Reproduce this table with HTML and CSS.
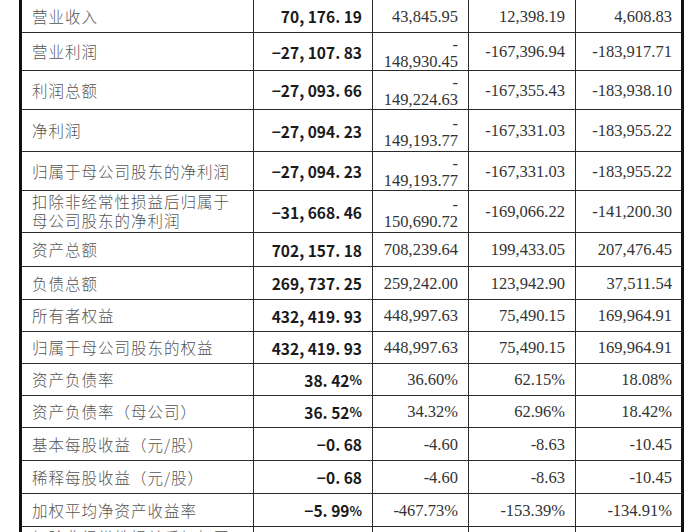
FILE: index.html
```html
<!DOCTYPE html>
<html lang="zh-CN">
<head>
<meta charset="utf-8">
<title>主要财务数据</title>
<link rel="stylesheet" href="styles.css">
</head>
<body>
<div class="sheet">
  <div class="c lab">营业收入</div><div class="c bold">70, 176. 19</div><div class="c num">43,845.95</div><div class="c num">12,398.19</div><div class="c num last">4,608.83</div>

  <div class="c lab">营业利润</div><div class="c bold">−27, 107. 83</div><div class="c num wrap">-<br>148,930.45</div><div class="c num">-167,396.94</div><div class="c num last">-183,917.71</div>

  <div class="c lab">利润总额</div><div class="c bold">−27, 093. 66</div><div class="c num wrap">-<br>149,224.63</div><div class="c num">-167,355.43</div><div class="c num last">-183,938.10</div>

  <div class="c lab">净利润</div><div class="c bold">−27, 094. 23</div><div class="c num wrap">-<br>149,193.77</div><div class="c num">-167,331.03</div><div class="c num last">-183,955.22</div>

  <div class="c lab">归属于母公司股东的净利润</div><div class="c bold">−27, 094. 23</div><div class="c num wrap">-<br>149,193.77</div><div class="c num">-167,331.03</div><div class="c num last">-183,955.22</div>

  <div class="c lab two">扣除非经常性损益后归属于<br>母公司股东的净利润</div><div class="c bold">−31, 668. 46</div><div class="c num wrap">-<br>150,690.72</div><div class="c num">-169,066.22</div><div class="c num last">-141,200.30</div>

  <div class="c lab">资产总额</div><div class="c bold">702, 157. 18</div><div class="c num">708,239.64</div><div class="c num">199,433.05</div><div class="c num last">207,476.45</div>

  <div class="c lab">负债总额</div><div class="c bold">269, 737. 25</div><div class="c num">259,242.00</div><div class="c num">123,942.90</div><div class="c num last">37,511.54</div>

  <div class="c lab">所有者权益</div><div class="c bold">432, 419. 93</div><div class="c num">448,997.63</div><div class="c num">75,490.15</div><div class="c num last">169,964.91</div>

  <div class="c lab">归属于母公司股东的权益</div><div class="c bold">432, 419. 93</div><div class="c num">448,997.63</div><div class="c num">75,490.15</div><div class="c num last">169,964.91</div>

  <div class="c lab">资产负债率</div><div class="c bold">38. 42<span class="pct">%</span></div><div class="c num">36.60%</div><div class="c num">62.15%</div><div class="c num last">18.08%</div>

  <div class="c lab">资产负债率（母公司）</div><div class="c bold">36. 52<span class="pct">%</span></div><div class="c num">34.32%</div><div class="c num">62.96%</div><div class="c num last">18.42%</div>

  <div class="c lab">基本每股收益（元/股）</div><div class="c bold">−0. 68</div><div class="c num">-4.60</div><div class="c num">-8.63</div><div class="c num last">-10.45</div>

  <div class="c lab">稀释每股收益（元/股）</div><div class="c bold">−0. 68</div><div class="c num">-4.60</div><div class="c num">-8.63</div><div class="c num last">-10.45</div>

  <div class="c lab">加权平均净资产收益率</div><div class="c bold">−5. 99<span class="pct">%</span></div><div class="c num">-467.73%</div><div class="c num">-153.39%</div><div class="c num last">-134.91%</div>

  <div class="c lab two">扣除非经常性损益后加权平<br>均净资产收益率</div><div class="c bold"></div><div class="c num"></div><div class="c num"></div><div class="c num last"></div>
</div>
</body>
</html>
```
FILE: styles.css
```css
html, body {
  margin: 0;
  padding: 0;
  background: #ffffff;
}

.sheet {
  display: grid;
  grid-template-columns: 232px 119px 96px 107px 105px;
  grid-template-rows: 33px 38px 39px 42px 39px 42px 34px 33px 32px 32px 32px 32px 33px 33px 33px 42px;
  width: max-content;
  margin-left: 19px;
  border-left: 3px solid #111111;
  border-right: 3px solid #111111;
}

.c {
  box-sizing: border-box;
  display: flex;
  align-items: center;
  justify-content: flex-end;
  border-right: 1px solid #2a2a2a;
  border-bottom: 1px solid #2a2a2a;
  padding: 0 10px 0 10px;
  white-space: nowrap;
  overflow: hidden;
}

.c.last {
  border-right: none;
  padding-right: 9px;
}

.lab {
  justify-content: flex-start;
  font-family: "Noto Sans CJK SC", sans-serif;
  font-weight: 300;
  font-size: 15.5px;
  letter-spacing: 1px;
  color: #555555;
  line-height: 19px;
}

.lab.two {
  line-height: 19px;
  align-items: flex-start;
  padding-top: 1px;
}

.bold {
  font-family: "Noto Sans CJK SC", "DejaVu Sans", sans-serif;
  font-weight: 700;
  font-size: 15.5px;
  color: #1a1a1a;
}

.pct {
  font-size: 13px;
}

.num {
  font-family: "Liberation Serif", "Times New Roman", serif;
  font-size: 16.5px;
  color: #333333;
  line-height: 19px;
}

.num.wrap {
  text-align: right;
  line-height: 17px;
  padding-top: 2px;
}
```
